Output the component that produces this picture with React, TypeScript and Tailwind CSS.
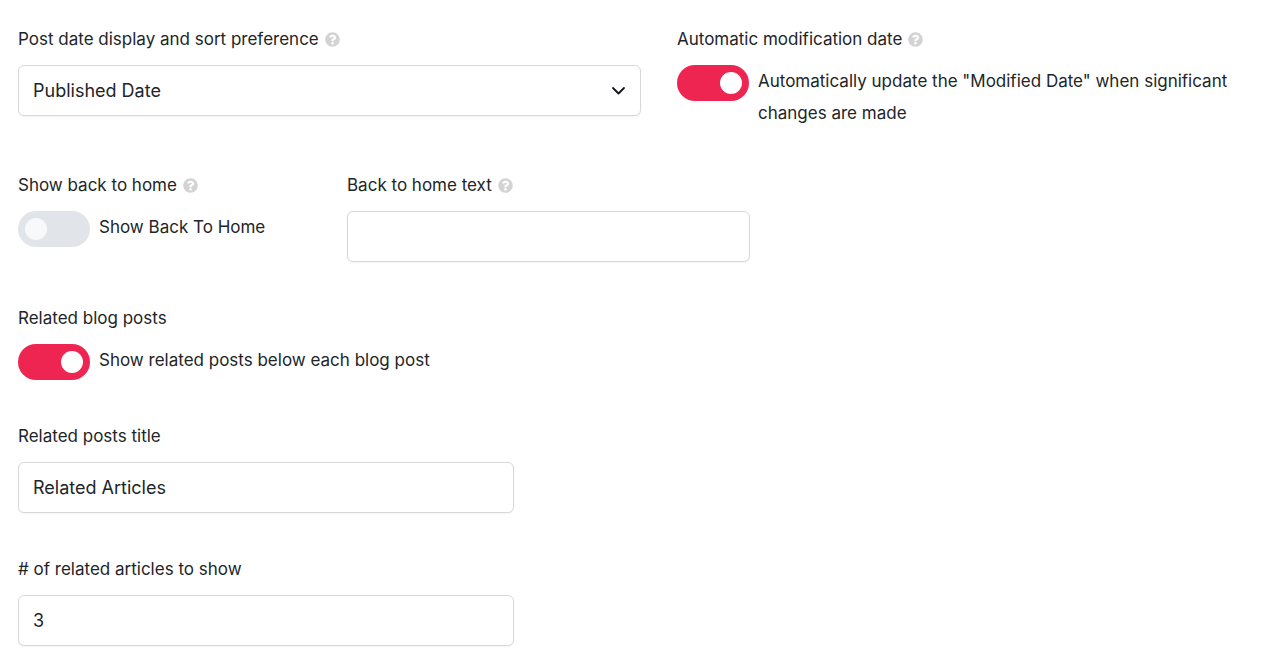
import { useId, useState } from "react"
import type { ReactNode } from "react"
import { FaQuestionCircle } from "react-icons/fa"

const inputClass =
  "h-[51px] w-full rounded-md border border-[#d8d8d8] bg-white px-3.5 text-lg shadow-xs outline-none focus:border-gray-400"

const HelpIcon = () => (
  <FaQuestionCircle className="h-[15px] w-[15px] shrink-0 text-[#d3d3d3]" aria-hidden="true" />
)

type FieldProps = {
  label: string
  htmlFor: string
  help?: boolean
  children: ReactNode
}

const Field = ({ label, htmlFor, help, children }: FieldProps) => (
  <div className="flex min-w-0 flex-col gap-2.5">
    <label htmlFor={htmlFor} className="flex items-center gap-1.5 leading-8">
      {label}
      {help && <HelpIcon />}
    </label>
    {children}
  </div>
)

type ToggleFieldProps = {
  label: string
  text: string
  help?: boolean
  defaultChecked?: boolean
}

const ToggleField = ({ label, text, help, defaultChecked = false }: ToggleFieldProps) => {
  const id = useId()
  const [checked, setChecked] = useState(defaultChecked)

  return (
    <Field label={label} htmlFor={id} help={help}>
      <div className="flex items-start gap-[9px]">
        <input
          id={id}
          type="checkbox"
          role="switch"
          checked={checked}
          onChange={(e) => setChecked(e.target.checked)}
          className="flex h-9 w-[72px] shrink-0 cursor-pointer appearance-none items-center rounded-full bg-[#e1e4e9] px-[7px] before:h-[22px] before:w-[22px] before:rounded-full before:bg-[#f8f9fb] checked:justify-end checked:bg-[#ee2550] checked:before:bg-white"
        />
        <label htmlFor={id} className="leading-8">
          {text}
        </label>
      </div>
    </Field>
  )
}

type TextFieldProps = {
  label: string
  defaultValue?: string
  help?: boolean
}

const TextField = ({ label, defaultValue = "", help }: TextFieldProps) => {
  const id = useId()

  return (
    <Field label={label} htmlFor={id} help={help}>
      <input id={id} type="text" defaultValue={defaultValue} className={inputClass} />
    </Field>
  )
}

const SortPreference = () => {
  const id = useId()

  return (
    <Field label="Post date display and sort preference" htmlFor={id} help>
      <div className="relative">
        <select id={id} defaultValue="published" className={`${inputClass} appearance-none`}>
          <option value="published">Published Date</option>
          <option value="modified">Modified Date</option>
        </select>
        <svg
          viewBox="0 0 16 16"
          className="pointer-events-none absolute top-[18px] right-[14px] h-4 w-4"
          fill="none"
          stroke="#111418"
          strokeWidth="1.8"
          strokeLinecap="round"
          strokeLinejoin="round"
          aria-hidden="true"
        >
          <path d="M2 5l5.500 5.500L13 5" />
        </svg>
      </div>
    </Field>
  )
}

export default function App() {
  return (
    <form className="flex flex-col gap-10 bg-white px-[18px] pt-[23px] pb-3.5 font-['Inter',sans-serif] text-[17px] text-[#212529]">
      <div className="grid grid-cols-[623fr_580fr] gap-9">
        <SortPreference />
        <ToggleField
          label="Automatic modification date"
          text={'Automatically update the "Modified Date" when significant changes are made'}
          help
          defaultChecked
        />
      </div>

      <div className="grid grid-cols-[293fr_403fr_471fr] gap-9">
        <ToggleField label="Show back to home" text="Show Back To Home" help />
        <TextField label="Back to home text" help />
      </div>

      <ToggleField label="Related blog posts" text="Show related posts below each blog post" defaultChecked />

      <div className="w-2/5">
        <TextField label="Related posts title" defaultValue="Related Articles" />
      </div>

      <div className="w-2/5">
        <TextField label="# of related articles to show" defaultValue="3" />
      </div>
    </form>
  )
}
